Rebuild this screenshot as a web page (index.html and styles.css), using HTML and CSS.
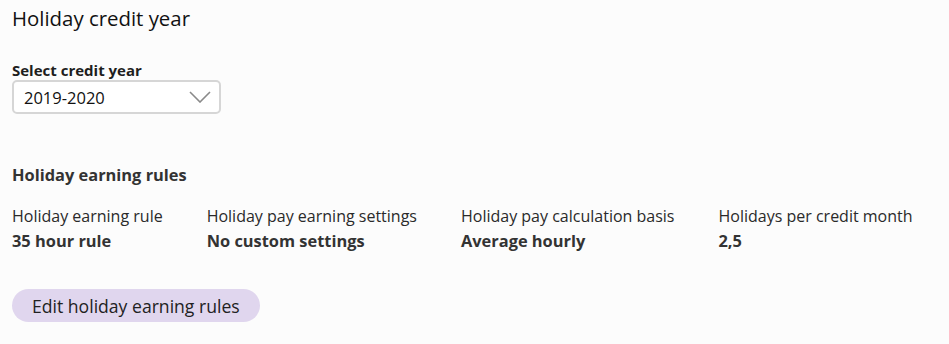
FILE: index.html
```html
<!DOCTYPE html>
<html lang="en">
<head>
<meta charset="utf-8">
<title>Holiday credit year</title>
<link rel="stylesheet" href="styles.css">
</head>
<body>
<main class="page">
  <h1 class="title">Holiday credit year</h1>
  <div class="field">
    <label class="field-label" for="year">Select credit year</label>
    <div class="select" id="year">
      <span class="select-value">2019-2020</span>
      <svg class="chevron" width="22" height="12" viewBox="0 0 22 12"><path d="M1 1 L11 11 L21 1" fill="none" stroke="#8a8a8a" stroke-width="1.6"/></svg>
    </div>
  </div>
  <h2 class="section-title">Holiday earning rules</h2>
  <div class="rules">
    <div class="rule"><div class="rule-label">Holiday earning rule</div><div class="rule-value">35 hour rule</div></div>
    <div class="rule"><div class="rule-label">Holiday pay earning settings</div><div class="rule-value">No custom settings</div></div>
    <div class="rule"><div class="rule-label">Holiday pay calculation basis</div><div class="rule-value">Average hourly</div></div>
    <div class="rule"><div class="rule-label">Holidays per credit month</div><div class="rule-value">2,5</div></div>
  </div>
  <button class="btn" type="button">Edit holiday earning rules</button>
</main>
</body>
</html>
```
FILE: styles.css
```css
html, body {
  margin: 0;
  padding: 0;
  background: #fcfcfc;
}
body {
  font-family: "Open Sans", "Noto Sans", sans-serif;
  color: #222;
}
.page {
  padding: 4px 12px 0 12px;
  display: flex;
  flex-direction: column;
  align-items: flex-start;
}
.title {
  margin: 0;
  font-size: 20.4px;
  font-weight: 500;
  line-height: 28px;
  color: #111;
}
.field {
  margin-top: 28px;
  display: flex;
  flex-direction: column;
}
.field-label {
  font-size: 15px;
  font-weight: 700;
  line-height: 20px;
  color: #1e1e1e;
}
.select {
  margin-top: 0;
  box-sizing: border-box;
  width: 209px;
  height: 34px;
  border: 2px solid #d6d6d6;
  border-radius: 5px;
  background: #fff;
  display: flex;
  align-items: center;
  justify-content: space-between;
  padding: 0 8px 0 10px;
}
.select-value {
  font-size: 16.5px;
  font-weight: 500;
  color: #111;
}
.chevron {
  display: block;
}
.section-title {
  margin: 50px 0 0 0;
  font-size: 16.4px;
  font-weight: 700;
  line-height: 22px;
  color: #333;
}
.rules {
  margin-top: 19px;
  display: flex;
  gap: 44px;
}
.rule {
  display: flex;
  flex-direction: column;
}
.rule-label {
  font-size: 16px;
  line-height: 22px;
  color: #2a2a2a;
}
.rule-value {
  font-size: 16.4px;
  font-weight: 700;
  line-height: 28px;
  color: #333;
}
.btn {
  margin-top: 34px;
  height: 33px;
  padding: 0 20px;
  border: none;
  border-radius: 17px;
  background: #e0d6ee;
  font-family: inherit;
  font-size: 17.6px;
  color: #222;
  cursor: pointer;
}
```
